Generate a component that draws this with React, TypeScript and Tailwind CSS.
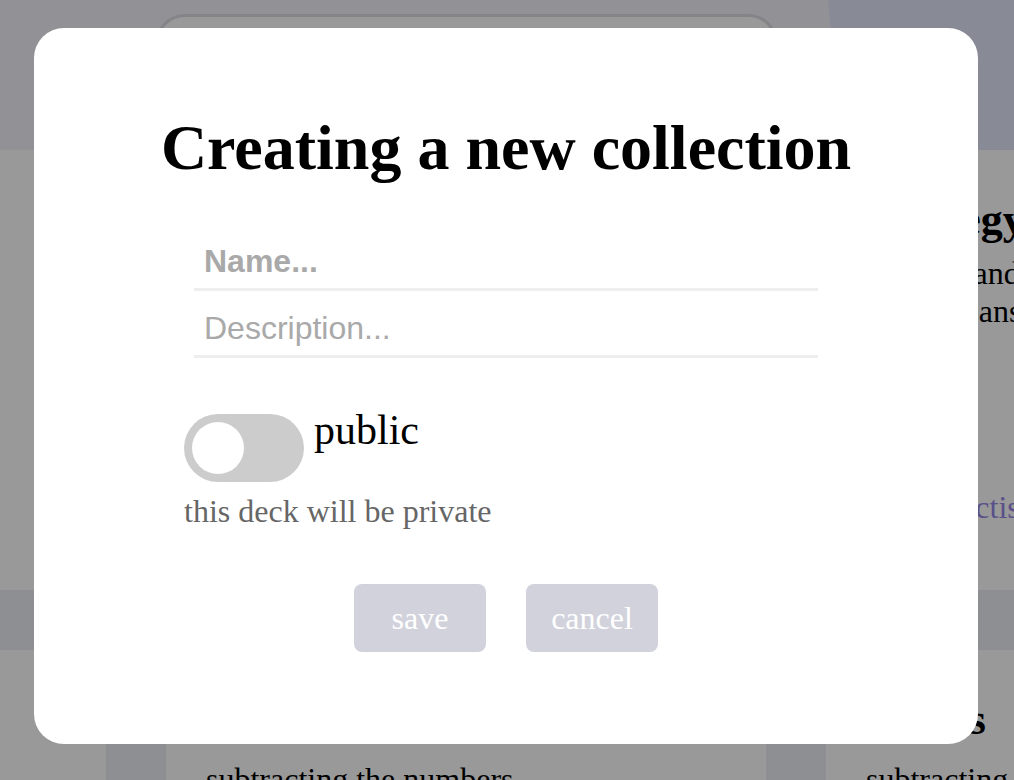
import { useState } from "react"

const topCard = {
  title: "Strategy",
  lines: ["Finding and", "tracking answers"],
  link: "Start practising",
}

export default function App() {
  const [isPublic, setIsPublic] = useState(false)

  return (
    <div className="relative h-screen w-full overflow-hidden bg-white font-['Liberation_Serif',serif] text-black">
      {/* Page behind the dialog */}
      <header className="relative h-[150px] bg-[#f3f3fa] overflow-hidden">
        <div className="absolute inset-y-0 right-0 w-[186px] bg-[#e3e6fa] [clip-path:polygon(0_0,100%_0,100%_100%,14px_100%)]" />
        <div className="relative ml-[155px] mt-[14px] h-[64px] w-[623px] rounded-[30px] border-[3px] border-[#dedee4] bg-white" />
      </header>

      <section className="flex h-[440px]">
        <div className="ml-[766px] flex">
          <div className="w-[60px] bg-[#edeef3]" />
          <div className="pl-[40px] pt-[44px] whitespace-nowrap">
            <h2 className="text-[44px] font-bold leading-[52px]">{topCard.title}</h2>
            <p className="mt-[8px] text-[32px] leading-[38px]">{topCard.lines[0]}</p>
            <p className="text-[32px] leading-[38px]">{topCard.lines[1]}</p>
            <p className="mt-[158px] text-[32px] leading-[38px] text-[#9685e6]">{topCard.link}</p>
          </div>
        </div>
      </section>

      <div className="h-[60px] bg-[#edeef5]" />

      <section className="flex pl-[106px]">
        {["Subtraction", "Minus"].map((title, i) => (
          <div key={i} className="flex w-[660px] shrink-0">
            <div className="w-[60px] bg-[#edeef3]" />
            <div className="pl-[40px] pt-[44px] whitespace-nowrap">
              <h2 className="text-[44px] font-bold leading-[52px]">{title}</h2>
              <p className="mt-[14px] text-[32px] leading-[38px]">subtracting the numbers</p>
            </div>
          </div>
        ))}
      </section>

      {/* Dialog overlay */}
      <div className="absolute inset-0 flex items-start bg-black/40 pt-[28px] pl-[34px]">
        <div className="flex h-[716px] w-[944px] flex-col rounded-[30px] bg-white px-[150px] pt-[88px]">
          <h1 className="-mx-[150px] whitespace-nowrap text-center text-[64px] font-bold leading-[64px]">
            Creating a new collection
          </h1>

          <div className="mx-auto mt-[44px] flex w-[624px] flex-col">
            <input
              placeholder="Name..."
              className="h-[67px] border-b-[3px] border-[#eeeeee] pl-[10px] pt-[10px] font-['Liberation_Sans',Arial,sans-serif] text-[32px] font-bold outline-none placeholder:text-[#a9a9a9]"
            />
            <input
              placeholder="Description..."
              className="h-[67px] border-b-[3px] border-[#eeeeee] pl-[10px] pt-[10px] font-['Liberation_Sans',Arial,sans-serif] text-[32px] outline-none placeholder:text-[#a9a9a9]"
            />
          </div>

          <div className="mt-[56px] flex items-start gap-[10px]">
            <button
              onClick={() => setIsPublic(!isPublic)}
              className={`flex h-[68px] w-[120px] items-center rounded-full px-[8px] ${isPublic ? "justify-end bg-[#7c6fd6]" : "justify-start bg-[#cccccc]"}`}
            >
              <span className="h-[52px] w-[52px] rounded-full bg-white" />
            </button>
            <span className="-mt-[8px] text-[42px] leading-[48px]">public</span>
          </div>
          <p className="mt-[11px] text-[32px] leading-[37px] text-[#666666]">
            {isPublic ? "this deck will be public" : "this deck will be private"}
          </p>

          <div className="mt-[54px] flex justify-center gap-[40px]">
            <button className="h-[68px] w-[132px] rounded-[8px] bg-[#d2d2dc] text-[32px] leading-[37px] text-white">save</button>
            <button className="h-[68px] w-[132px] rounded-[8px] bg-[#d2d2dc] text-[32px] leading-[37px] text-white">cancel</button>
          </div>
        </div>
      </div>
    </div>
  )
}
